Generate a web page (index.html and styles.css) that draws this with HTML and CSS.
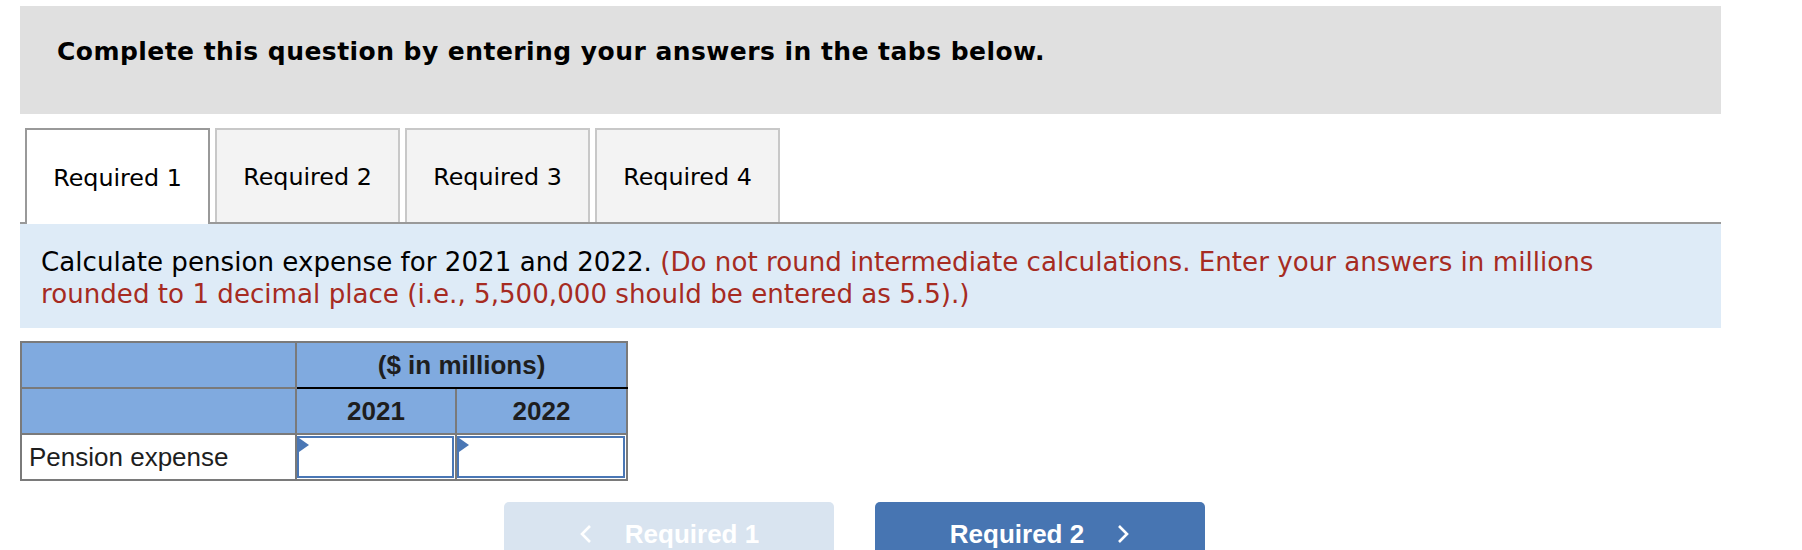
FILE: index.html
```html
<!DOCTYPE html>
<html lang="en">
<head>
<meta charset="utf-8">
<title>Question</title>
<link rel="stylesheet" href="styles.css">
</head>
<body>
<div class="page">
  <div class="banner">
    <h1 class="banner-title">Complete this question by entering your answers in the tabs below.</h1>
  </div>

  <div class="tabs">
    <div class="tab tab-active">Required 1</div>
    <div class="tab">Required 2</div>
    <div class="tab">Required 3</div>
    <div class="tab">Required 4</div>
  </div>

  <div class="prompt">
    <p class="prompt-text">Calculate pension expense for 2021 and 2022. <span class="hint">(Do not round intermediate calculations. Enter your answers in millions rounded to 1 decimal place (i.e., 5,500,000 should be entered as 5.5).)</span></p>
  </div>

  <table class="grid">
    <colgroup>
      <col class="c-label">
      <col class="c-2021">
      <col class="c-2022">
    </colgroup>
    <tr class="head">
      <td></td>
      <td colspan="2" class="span-head">($ in millions)</td>
    </tr>
    <tr class="head">
      <td></td>
      <td>2021</td>
      <td>2022</td>
    </tr>
    <tr class="body">
      <td class="label">Pension expense</td>
      <td class="cell"><div class="input"><span class="flag"></span></div></td>
      <td class="cell"><div class="input"><span class="flag"></span></div></td>
    </tr>
  </table>

  <div class="nav">
    <div class="btn btn-prev">
      <svg class="chev" width="14" height="20" viewBox="0 0 14 20"><polyline points="11,2 3,10 11,18" fill="none" stroke="#ffffff" stroke-width="2.6" stroke-linejoin="miter"/></svg>
      <span>Required 1</span>
    </div>
    <div class="btn btn-next">
      <span>Required 2</span>
      <svg class="chev" width="14" height="20" viewBox="0 0 14 20"><polyline points="3,2 11,10 3,18" fill="none" stroke="#ffffff" stroke-width="2.6" stroke-linejoin="miter"/></svg>
    </div>
  </div>
</div>
</body>
</html>
```

FILE: styles.css
```css
html, body {
  margin: 0;
  padding: 0;
  background: #ffffff;
}

.page {
  width: 1701px;
  margin: 6px 0 0 20px;
  font-family: "DejaVu Sans", Verdana, sans-serif;
}

.banner {
  background: #e0e0e0;
  height: 108px;
  box-sizing: border-box;
  padding: 31px 0 0 37px;
}

.banner-title {
  margin: 0;
  font-size: 25px;
  line-height: 30px;
  font-weight: bold;
  color: #000000;
  letter-spacing: 0.45px;
}

.tabs {
  display: flex;
  gap: 5px;
  margin-top: 14px;
  padding-left: 5px;
  border-bottom: 2px solid #999999;
  height: 94px;
}

.tab {
  width: 185px;
  height: 94px;
  box-sizing: border-box;
  border: 2px solid #c8c8c8;
  border-bottom: none;
  background: #f3f3f3;
  display: flex;
  align-items: center;
  justify-content: center;
  font-size: 23.8px;
  color: #000000;
  padding-top: 2px;
}

.tab-active {
  background: #ffffff;
  border-color: #999999;
  height: 96px;
  margin-bottom: -2px;
  position: relative;
  z-index: 1;
}

.prompt {
  background: #deebf7;
  padding: 22px 100px 18px 21px;
}

.prompt-text {
  margin: 0;
  font-size: 26.1px;
  line-height: 32px;
  letter-spacing: 0.02px;
  color: #000000;
}

.hint {
  color: #a62b22;
}

.grid {
  margin-top: 13px;
  border-collapse: collapse;
  border: 2px solid #7a7a7a;
  font-family: "Liberation Sans", Arial, sans-serif;
  table-layout: fixed;
  width: 606px;
}

.c-label { width: 275px; }
.c-2021 { width: 160px; }
.c-2022 { width: 171px; }

.grid td {
  border: 2px solid #7a7a7a;
  height: 42px;
  padding: 0;
  box-sizing: border-box;
}

.head td {
  background: #80aadf;
  font-weight: bold;
  font-size: 26px;
  color: #1e1e1e;
  text-align: center;
  height: 46px;
}

.head .span-head {
  border-bottom: 2px solid #000000;
}

.body td {
  background: #ffffff;
  height: 46px;
}

.label {
  font-size: 26px;
  color: #1e1e1e;
  padding-left: 7px !important;
}

.cell {
  padding: 0 !important;
}

.input {
  position: relative;
  height: 42px;
  margin: 0 1px 0 0;
  border: 2px solid #4a77b5;
  box-sizing: border-box;
  background: #ffffff;
}

.flag {
  position: absolute;
  left: 0;
  top: 0;
  width: 0;
  height: 0;
  border-top: 7px solid transparent;
  border-bottom: 7px solid transparent;
  border-left: 10px solid #4a77b5;
  box-sizing: content-box;
}

.nav {
  display: flex;
  gap: 41px;
  margin-top: 21px;
  padding-left: 484px;
}

.btn {
  width: 330px;
  height: 64px;
  border-radius: 5px;
  display: flex;
  align-items: center;
  justify-content: center;
  gap: 32px;
  font-family: "Liberation Sans", Arial, sans-serif;
  font-weight: bold;
  font-size: 26px;
  color: #ffffff;
}

.btn-prev {
  background: #d9e4f0;
}

.btn-next {
  background: #4775b2;
}

.chev {
  display: block;
}
```
